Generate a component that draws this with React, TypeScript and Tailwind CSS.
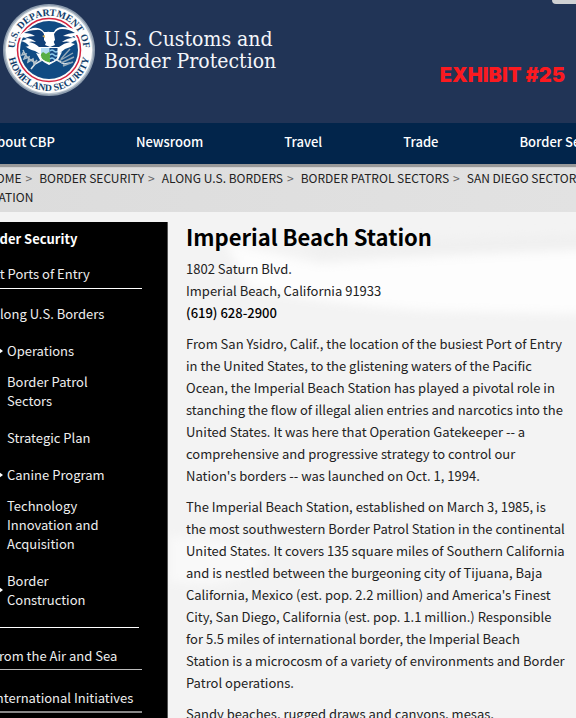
import React from "react";

const navItems = ["About CBP", "Newsroom", "Travel", "Trade", "Border Security"];

const crumbs = ["HOME", "BORDER SECURITY", "ALONG U.S. BORDERS", "BORDER PATROL SECTORS", "SAN DIEGO SECTOR"];

const borderLinks = [
  { label: "Operations", arrow: true, tall: false },
  { label: "Border Patrol Sectors", arrow: false, tall: true },
  { label: "Strategic Plan", arrow: false, tall: false },
  { label: "Canine Program", arrow: true, tall: false },
  { label: "Technology Innovation and Acquisition", arrow: false, tall: true },
  { label: "Border Construction", arrow: true, tall: false },
];

function Seal() {
  return (
    <svg viewBox="0 0 100 100" className="h-[100px] w-[100px] shrink-0" role="img" aria-label="Department of Homeland Security seal">
      <defs>
        <path id="arcTop" d="M17.5 64 A34.400 34.400 0 1 1 80.500 64" />
        <path id="arcBottom" d="M8 50 A41 41 0 0 0 90 50" />
        <clipPath id="shield">
          <path d="M40.5 47.5h17.5v8q0 5-8.7 7.500-8.800-2.500-8.800-7.500z" />
        </clipPath>
      </defs>
      <circle cx="49" cy="50" r="46" fill="#8d9cae" />
      <circle cx="49" cy="50" r="44.500" fill="#b9c4ce" />
      <circle cx="49" cy="50" r="43.200" fill="#fdfdfd" />
      <circle cx="49" cy="50" r="31.500" fill="none" stroke="#d3233f" strokeWidth="1.500" />
      <circle cx="49" cy="50" r="29" fill="#104b83" />
      <path d="M44 32q-4-5-11-4l-8 3q-5 3-6 7 5-2 8 1l-6 2q5 1 8 5l-4 1q6 3 10 4l5 3-4-1 4 7 9 5 9-5 4-8-2 1 5-4q5-1 10-5l-4-1q4-3 8-4l-7-2q4-3 8-2-3-6-9-7l-8-1q-7 0-9 5z" fill="#fff" />
      <path d="M44 34q-3-5-8-4-7 0-12 3 7 0 11 3-6 0-10 2 6 0 11 4-5-1-7 0 6 1 10 5h20q5-4 11-5-3-1-8 0 5-4 11-4-4-2-10-2 5-3 12-3-6-4-13-4-5 0-8 5l1 6-3 4h-5l-3-4z" fill="#103f76" />
      <path d="M45 35q0-4 5-3 4 0 4 4l-1 4 2 5-5 2-5-2 2-5z" fill="#fff" />
      <path d="M45 35l-3 1 3 2z" fill="#d9b660" />
      <path d="M22 47q5 1 8 6 4 8 13 10M76 47q-5 1-8 6-4 8-12 10" stroke="#104b83" strokeWidth="3" fill="none" />
      <g clipPath="url(#shield)">
        <path fill="#b4dcf3" d="M40 47h10v9H40z" />
        <path fill="#174a83" d="M49.500 47H59v17h-9.500z" />
        <path d="M39 56l4-4 3 2 3-2 1 1v11H39z" fill="#58ae45" />
        <path d="M50 51q2-2 4 0t4 0M50 55q2-2 4 0t4 0M50 59q2-2 4 0t4 0" stroke="#8ccbed" strokeWidth="1.500" fill="none" />
      </g>
      <path d="M40.500 47.500h17.500v8q0 5-8.700 7.500-8.800-2.500-8.800-7.500z" fill="none" stroke="#fff" strokeWidth="1" />
      <path d="M42 60l-7 4-4 5M57 60l7 4 6-1" stroke="#d8e2e8" strokeWidth="1.600" fill="none" />
      <path d="M23 50q3 9 13 13M24 51l-2 4 4-1-2 5 5-2-1 5 5-3 1 5 3-4" stroke="#b1c0ca" strokeWidth="1.500" fill="none" />
      <path d="M59 61l14-8M61 63l13-6M61 59l9-10M63 66l10-4" stroke="#93a8b7" strokeWidth="1.400" />
      <g fill="#123d6b" fontFamily="'Liberation Serif', serif" fontSize="9.800" fontWeight="700">
        <text><textPath href="#arcTop" startOffset="50%" textAnchor="middle">U.S. DEPARTMENT OF</textPath></text>
        <text><textPath href="#arcBottom" startOffset="50%" textAnchor="middle">HOMELAND SECURITY</textPath></text>
      </g>
    </svg>
  );
}

function Backdrop() {
  return (
    <svg className="absolute inset-0 -z-10 h-full w-full" viewBox="0 0 576 506" preserveAspectRatio="none" aria-hidden="true">
      <defs>
        <filter id="soft"><feGaussianBlur stdDeviation="5" /></filter>
      </defs>
      <rect width="576" height="506" fill="#f3f3f3" />
      <g filter="url(#soft)">
        <path d="M225 30 L320 52 Q400 46 590 38 V102 L430 99 Q320 92 250 76z" fill="#fdfdfd" />
        <path d="M300 32 L590 22 V36 L320 46z" fill="#f0f0f0" />
        <path d="M170 324 Q250 326 262 350 Q240 378 170 370z" fill="#f9f9f9" />
      </g>
    </svg>
  );
}

export default function App() {
  return (
    <div className="flex h-screen flex-col overflow-hidden bg-[#f3f3f3] font-['Noto_Sans_CJK_SC',sans-serif] text-[#222]">
      <header className="relative flex h-[123px] shrink-0 items-start justify-between bg-[#213456]">
        <div className="flex">
          <Seal />
          <p className="pt-7 pl-1 font-['DejaVu_Serif_Condensed','DejaVu_Serif',serif] text-[21px] leading-[22px] whitespace-nowrap text-[#f4f6fa]">
            U.S. Customs and
            <br />
            Border Protection
          </p>
        </div>
        <strong className="pt-[63px] pr-[11px] font-['Inter',sans-serif] text-[20px] leading-6 font-black whitespace-nowrap text-[#fb1a20]">EXHIBIT #25</strong>
        <div className="absolute top-0 right-0 h-1 w-6 rounded-bl-full bg-[#cfd1d3]" />
      </header>

      <nav aria-label="Main" className="z-10 flex h-[41px] shrink-0 items-center gap-[81px] bg-[#02254b] pb-1 text-[13px] font-medium whitespace-nowrap text-white shadow-[0_3px_1px_#999]">
        {navItems.map((item, i) => (
          <a key={item} href="#" className={i === 0 ? "-ml-[11px]" : ""}>{item}</a>
        ))}
      </nav>

      <nav aria-label="Breadcrumb" className="h-12 shrink-0 bg-gradient-to-r from-[#dcdcdc] to-[#e2e2e2] pt-1 text-[12px] leading-[19px]">
        <ol className="-ml-[13px] flex whitespace-nowrap">
          {crumbs.map((crumb, i) => (
            <li key={crumb} className="mr-[7px]">
              <a href="#">{crumb}</a>
              {i < crumbs.length - 1 && <span className="ml-1 text-[#666]">&gt;</span>}
            </li>
          ))}
        </ol>
        <p className="-ml-[15px]">STATION</p>
      </nav>

      <div className="relative isolate flex min-h-0 flex-1 items-stretch pt-[10px]">
        <Backdrop />
        <aside className="w-[168px] shrink-0 overflow-hidden border-r border-[#555] bg-black text-[13px] leading-[19px] text-[#eee]">
          <h2 className="-ml-[23px] pt-[7px] leading-5 font-bold whitespace-nowrap text-white">Border Security</h2>
          <ul className="-ml-2">
            <li className="mr-[25px] border-b border-white pt-[15px] pb-[5px]"><a href="#">At Ports of Entry</a></li>
            <li className="mr-[28px] border-b border-white pt-[15px] pb-[18px]">
              <a href="#">Along U.S. Borders</a>
              <ul>
                {borderLinks.map((link) => (
                  <li key={link.label} className={`relative pl-[15px] ${link.tall ? "mt-3" : "mt-[18px]"}`}>
                    {link.arrow && <span className="absolute top-1/2 left-[7px] h-0 w-0 -translate-y-1/2 border-y-[3px] border-l-[4px] border-y-transparent border-l-white" />}
                    <a href="#" className="block w-[100px]">{link.label}</a>
                  </li>
                ))}
              </ul>
            </li>
            <li className="mr-[25px] border-b border-[#bbb] pt-[18px] pb-1"><a href="#">From the Air and Sea</a></li>
            <li className="mr-[25px] border-b-2 border-[#888] pt-[18px] pb-1 whitespace-nowrap"><a href="#">International Initiatives</a></li>
          </ul>
        </aside>

        <main className="min-w-0 flex-1 pr-1 pl-[18px] text-[13px] leading-[22px]">
          <h1 className="text-[22px] leading-[28px] font-bold text-black">Imperial Beach Station</h1>
          <address className="mt-2 not-italic">
            1802 Saturn Blvd.
            <br />
            Imperial Beach, California 91933
            <br />
            <a href="tel:6196282900" className="font-medium text-black">(619) 628-2900</a>
          </address>
          <p className="mt-[9px]">
            From San Ysidro, Calif., the location of the busiest Port of Entry in the United States, to the glistening waters of the Pacific Ocean, the Imperial Beach Station has played a pivotal role in stanching the flow of illegal alien entries and narcotics into the United States. It was here that Operation Gatekeeper -- a comprehensive and progressive strategy to control our
            <br />
            Nation's borders -- was launched on Oct. 1, 1994.
          </p>
          <p className="mt-[9px]">
            The Imperial Beach Station, established on March 3, 1985, is
            <br />
            the most southwestern Border Patrol Station in the continental United States. It covers 135 square miles of Southern California and is nestled between the burgeoning city of Tijuana, Baja California, Mexico (est. pop. 2.2 million) and America's Finest City, San Diego, California (est. pop. 1.1 million.) Responsible
            <br />
            for 5.5 miles of international border, the Imperial Beach
            <br />
            Station is a microcosm of a variety of environments and Border Patrol operations.
          </p>
          <p className="mt-[9px]">Sandy beaches, rugged draws and canyons, mesas,</p>
        </main>
      </div>
    </div>
  );
}
